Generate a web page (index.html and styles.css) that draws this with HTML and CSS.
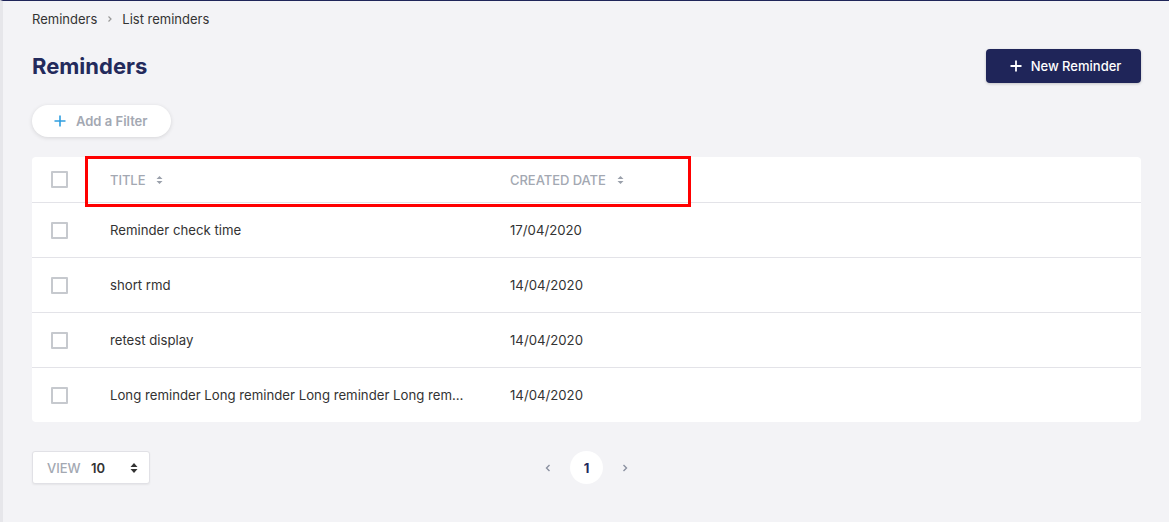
FILE: index.html
```html
<!DOCTYPE html>
<html>
<head>
<meta charset="utf-8">
<link rel="stylesheet" href="styles.css">
</head>
<body>
<div class="frame">
  <div class="content">
    <nav class="crumbs">
      <span>Reminders</span>
      <svg class="crumb-sep" width="5" height="8" viewBox="0 0 5 8"><path d="M1.5 1.5 L4 4 L1.5 6.5" fill="none" stroke="#999" stroke-width="1.2"/></svg>
      <span>List reminders</span>
    </nav>
    <div class="head">
      <h1 class="title">Reminders</h1>
      <button class="btn-primary">
        <svg width="12" height="12" viewBox="0 0 12 12"><path d="M6 0.5 V11.5 M0.5 6 H11.5" stroke="#fff" stroke-width="1.8"/></svg>
        New Reminder
      </button>
    </div>
    <button class="filter">
      <svg width="12" height="12" viewBox="0 0 12 12"><path d="M6 0.5 V11.5 M0.5 6 H11.5" stroke="#2f9ee0" stroke-width="1.6"/></svg>
      Add a Filter
    </button>
    <div class="table">
      <div class="row header">
        <div class="cb-cell"><span class="cb"></span></div>
        <div class="c-title">TITLE <svg class="sort" width="7" height="10" viewBox="0 0 7 10"><path d="M0.5 4 L3.5 1 L6.5 4 Z M0.5 6 L3.5 9 L6.5 6 Z" fill="#9aa0ab"/></svg></div>
        <div class="c-date">CREATED DATE <svg class="sort" width="7" height="10" viewBox="0 0 7 10"><path d="M0.5 4 L3.5 1 L6.5 4 Z M0.5 6 L3.5 9 L6.5 6 Z" fill="#9aa0ab"/></svg></div>
        <div class="annot"></div>
      </div>
      <div class="row">
        <div class="cb-cell"><span class="cb"></span></div>
        <div class="c-title">Reminder check time</div>
        <div class="c-date">17/04/2020</div>
      </div>
      <div class="row">
        <div class="cb-cell"><span class="cb"></span></div>
        <div class="c-title">short rmd</div>
        <div class="c-date">14/04/2020</div>
      </div>
      <div class="row">
        <div class="cb-cell"><span class="cb"></span></div>
        <div class="c-title">retest display</div>
        <div class="c-date">14/04/2020</div>
      </div>
      <div class="row last">
        <div class="cb-cell"><span class="cb"></span></div>
        <div class="c-title"><span class="ellip">Long reminder Long reminder Long reminder Long reminder</span></div>
        <div class="c-date">14/04/2020</div>
      </div>
    </div>
    <div class="foot">
      <div class="view">
        <span class="view-label">VIEW</span>
        <span class="view-val">10</span>
        <svg width="8" height="12" viewBox="0 0 8 12"><path d="M0.5 5 L4 1 L7.5 5 Z M0.5 7 L4 11 L7.5 7 Z" fill="#333"/></svg>
      </div>
      <div class="pager">
        <svg width="6" height="8" viewBox="0 0 6 8"><path d="M4.5 1 L1.5 4 L4.5 7" fill="none" stroke="#8a90a0" stroke-width="1.4"/></svg>
        <span class="page">1</span>
        <svg width="6" height="8" viewBox="0 0 6 8"><path d="M1.5 1 L4.5 4 L1.5 7" fill="none" stroke="#8a90a0" stroke-width="1.4"/></svg>
      </div>
      <div class="spacer"></div>
    </div>
  </div>
</div>
</body>
</html>
```
FILE: styles.css
```css
* { box-sizing: border-box; }
html, body { margin: 0; padding: 0; }
body {
  width: 1169px;
  height: 522px;
  overflow: hidden;
  background: #f3f3f6;
  font-family: Inter, "Noto Sans", sans-serif;
  color: #333;
}
.frame {
  height: 522px;
  border-top: 1px solid #1f2559;
  border-left: 3px solid #e6e6ea;
}
.content {
  padding: 0 28px 0 29px;
}
.crumbs {
  display: flex;
  align-items: center;
  gap: 10px;
  height: 36px;
  padding-bottom: 1px;
  font-size: 13px;
  color: #333;
}
.head {
  display: flex;
  justify-content: space-between;
  align-items: center;
  height: 59px;
}
.title {
  margin: 0;
  font-size: 22px;
  font-weight: 700;
  color: #232a5c;
  padding-bottom: 2px;
}
.btn-primary {
  display: flex;
  align-items: center;
  gap: 9px;
  height: 34px;
  width: 155px;
  justify-content: center;
  padding: 0 0 0 4px;
  margin-top: -1px;
  background: #1f2559;
  color: #fff;
  border: none;
  border-radius: 4px;
  font-family: inherit;
  font-size: 13px;
  font-weight: 500;
  box-shadow: 0 1px 3px rgba(0,0,0,0.2);
}
.filter {
  display: flex;
  align-items: center;
  gap: 10px;
  margin-top: 9px;
  height: 32px;
  width: 139px;
  padding: 0 0 0 22px;
  background: #fff;
  border: none;
  border-radius: 17px;
  font-family: inherit;
  font-size: 13px;
  font-weight: 600;
  color: #a3a8b2;
  box-shadow: 0 1px 4px rgba(0,0,0,0.12);
}
.table {
  margin-top: 20px;
  background: #fff;
  border-radius: 4px;
}
.row {
  position: relative;
  display: flex;
  align-items: center;
  height: 55px;
  border-bottom: 1px solid #e3e3e8;
  font-size: 13.2px;
  color: #333;
}
.row.header { height: 46px; }
.row.last { border-bottom: none; height: 54px; }
.cb-cell { width: 78px; padding-left: 19px; display: flex; }
.cb {
  width: 17px;
  height: 17px;
  border: 2px solid #c6c9ce;
  border-radius: 1px;
}
.c-title { width: 400px; display: flex; align-items: center; overflow: hidden; }
.c-date { display: flex; align-items: center; }
.header .c-title, .header .c-date {
  color: #a3a8b2;
  font-size: 13px;
  font-weight: 500;
  letter-spacing: -0.05px;
}
.sort { margin-left: 11px; }
.ellip {
  display: block;
  width: 354px;
  white-space: nowrap;
  overflow: hidden;
  text-overflow: ellipsis;
}
.annot {
  position: absolute;
  left: 53px;
  top: -1px;
  width: 606px;
  height: 51px;
  border: 3px solid #ff0000;
  pointer-events: none;
}
.foot {
  display: flex;
  justify-content: space-between;
  align-items: center;
  margin-top: 29px;
}
.view {
  display: flex;
  align-items: center;
  width: 118px;
  height: 33px;
  padding: 0 11px 0 14px;
  background: #fff;
  border: 1px solid #e1e1e6;
  border-radius: 3px;
  box-shadow: 0 1px 2px rgba(0,0,0,0.06);
  font-size: 13px;
}
.view-label { color: #a3a8b2; font-weight: 500; width: 44px; }
.view-val { color: #333; font-weight: 600; flex: 1; }
.pager {
  display: flex;
  align-items: center;
  gap: 19px;
}
.page {
  width: 33px;
  height: 33px;
  border-radius: 50%;
  background: #fff;
  display: flex;
  align-items: center;
  justify-content: center;
  font-size: 13px;
  font-weight: 700;
  color: #232a5c;
}
.spacer { width: 118px; }
```
